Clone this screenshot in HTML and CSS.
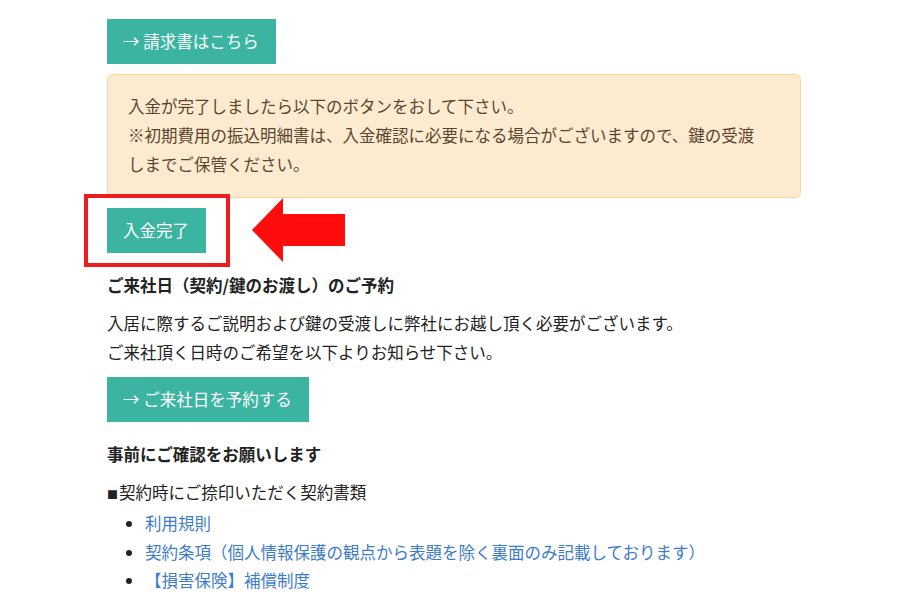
FILE: index.html
```html
<!DOCTYPE html>
<html lang="ja">
<head>
  <meta charset="UTF-8" />
  <meta name="viewport" content="width=device-width, initial-scale=1.0"/>
  <title>ご入金・ご来社のご案内</title>
  <link rel="stylesheet" href="styles.css">
</head>
<body>

<div class="container">
  <a class="btn" href="#">→ 請求書はこちら</a>

  <div class="notice">
    入金が完了しましたら以下のボタンをおして下さい。<br>
    ※初期費用の振込明細書は、入金確認に必要になる場合がございますので、鍵の受渡しまでご保管ください。
  </div>

  <div class="done-wrap">
    <a class="btn" href="#">入金完了</a>
    <div class="mark-box"></div>
    <svg class="mark-arrow" width="94" height="64" viewBox="0 0 94 64">
      <polygon points="0,32 31,0 31,16 93,16 93,48 31,48 31,64" fill="#ff0c0c"/>
    </svg>
  </div>

  <h3>ご来社日（契約/鍵のお渡し）のご予約</h3>
  <p>入居に際するご説明および鍵の受渡しに弊社にお越し頂く必要がございます。<br>
  ご来社頂く日時のご希望を以下よりお知らせ下さい。</p>
  <a class="btn" href="#">→ ご来社日を予約する</a>

  <h3>事前にご確認をお願いします</h3>
  <p><span class="sq">■</span>契約時にご捺印いただく契約書類</p>
  <ul class="docs">
    <li><a href="#">利用規則</a></li>
    <li><a href="#">契約条項（個人情報保護の観点から表題を除く裏面のみ記載しております）</a></li>
    <li><a href="#">【損害保険】補償制度</a></li>
  </ul>
</div>

</body>
</html>
```

FILE: styles.css
```css
body {
  font-family: "Noto Sans CJK JP", "Noto Sans", sans-serif;
  background: #fff;
  color: #222;
  margin: 0;
  padding: 0;
}
.container {
  width: 694px;
  padding: 19px 0 0 107px;
  font-size: 16.5px;
  line-height: 29px;
}
.btn {
  display: inline-block;
  background: #3bb5a2;
  color: #fff;
  text-decoration: none;
  padding: 8px 17px 8px 16px;
  line-height: 29px;
}
.notice {
  margin-top: 10px;
  background: #fdebcf;
  border: 1px solid #f4d59f;
  border-radius: 6px;
  padding: 17px 30px 18px 20px;
  color: #5a4630;
}
.done-wrap {
  position: relative;
  margin-top: 10px;
}
.mark-box {
  position: absolute;
  left: -23px;
  top: -14px;
  width: 138px;
  height: 65px;
  border: 4px solid #ee1c1c;
}
.mark-arrow {
  position: absolute;
  left: 145px;
  top: -10px;
}
h3 {
  font-size: 16.5px;
  font-weight: bold;
  margin: 18px 0 9px;
  line-height: 29px;
}
p {
  margin: 0 0 10px;
}
.sq {
  font-size: 11px;
  margin-right: 1px;
}
.docs {
  margin: -10px 0 0;
  padding-left: 38px;
  line-height: 28.5px;
}
.docs a {
  color: #3d7ccc;
  text-decoration: none;
}
```
